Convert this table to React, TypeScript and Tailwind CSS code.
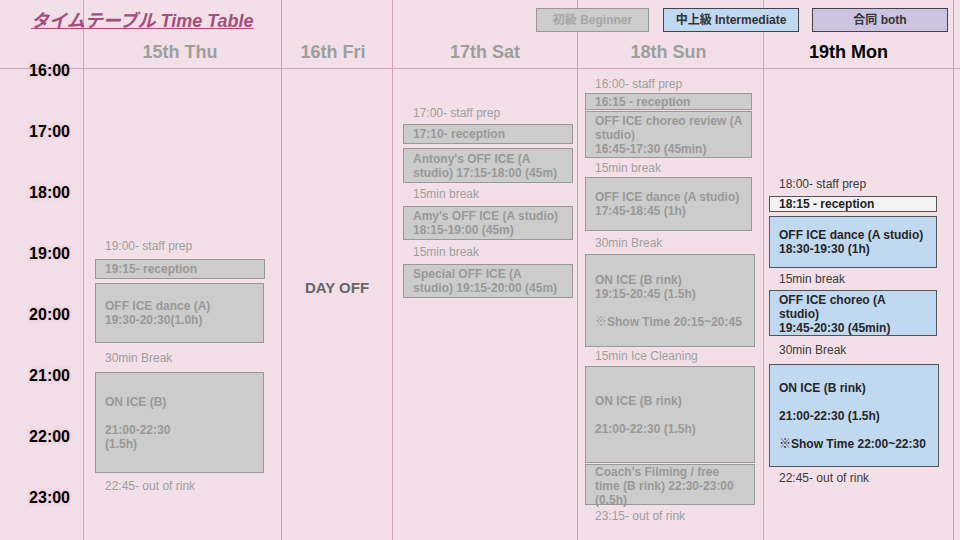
// Skating camp timetable — five day columns with session blocks per hour

type Tone = "gray" | "blue" | "white";

const toneClass: Record<Tone, string> = {
  gray: "bg-[#cccccc] border-[#999999] text-[#999999]",
  blue: "bg-[#c0d8f0] border-[#555555] text-[#262626]",
  white: "bg-[#f3f3f3] border-[#555555] text-[#222222]",
};

function Box({
  tone,
  lines,
  className,
  top = false,
}: {
  tone: Tone;
  lines: string[];
  className: string;
  top?: boolean;
}) {
  return (
    <div
      className={`${toneClass[tone]} ${className} shrink-0 border flex flex-col ${
        top ? "justify-start" : "justify-center"
      } pl-[9px] font-bold text-[12px] leading-[14px] whitespace-nowrap`}
    >
      {lines.map((l, i) =>
        l ? <span key={i}>{l}</span> : <span key={i} className="h-[14px]" />
      )}
    </div>
  );
}

function Note({ text, dark = false, className }: { text: string; dark?: boolean; className: string }) {
  return (
    <p
      className={`${className} shrink-0 pl-[10px] text-[12px] leading-[14px] whitespace-nowrap ${
        dark ? "text-[#3a3a3a]" : "text-[#9e9e9e]"
      }`}
    >
      {text}
    </p>
  );
}

const hours = ["16:00", "17:00", "18:00", "19:00", "20:00", "21:00", "22:00", "23:00"];

const line = "border-[#d6a1b9]";

const days = [
  { label: "15th Thu", tint: "text-[#9e9e9e] pr-[5px]" },
  { label: "16th Fri", tint: "text-[#9e9e9e] pr-[8px]" },
  { label: "17th Sat", tint: "text-[#9e9e9e]" },
  { label: "18th Sun", tint: "text-[#9e9e9e] pr-[4px]" },
  { label: "19th Mon", tint: "text-black pr-[20px]" },
];

export default function App() {
  return (
    <div className="relative w-[960px] h-[540px] overflow-hidden bg-[#f2dfe7] font-['Liberation_Sans','Noto_Sans_CJK_JP',sans-serif]">
      <div className="grid grid-cols-[84px_198px_111px_185px_186px_190px_1fr] grid-rows-[69px_471px]">
        {/* Header row */}
        <div className={`border-r border-b ${line}`} />
        {days.map((d) => (
          <div
            key={d.label}
            className={`border-r border-b ${line} pt-[42px] text-center text-[18px] leading-[21px] font-bold ${d.tint}`}
          >
            {d.label}
          </div>
        ))}
        <div className={`border-b ${line}`} />

        {/* Time labels */}
        <div className={`border-r ${line} flex flex-col items-end pr-[13px]`}>
          {hours.map((h, i) => (
            <div
              key={h}
              className={`${i === 0 ? "-mt-[7px]" : ""} shrink-0 h-[61px] text-[16px] leading-[18px] font-bold text-black [text-shadow:0_0_4px_#e2b5c8]`}
            >
              {h}
            </div>
          ))}
        </div>

        {/* 15th Thu */}
        <div className={`border-r ${line} flex flex-col pl-[11px]`}>
          <Note className="mt-[170px]" text="19:00- staff prep" />
          <Box tone="gray" className="mt-[6px] w-[170px] h-[20px]" lines={["19:15- reception"]} />
          <Box
            tone="gray"
            className="mt-[4px] w-[169px] h-[60px]"
            lines={["OFF ICE dance (A)", "19:30-20:30(1.0h)"]}
          />
          <Note className="mt-[8px]" text="30min Break" />
          <Box
            tone="gray"
            className="mt-[7px] w-[169px] h-[101px]"
            lines={["ON ICE (B)", "", "21:00-22:30", "(1.5h)"]}
          />
          <Note className="mt-[6px]" text="22:45- out of rink" />
        </div>

        {/* 16th Fri */}
        <div className={`border-r ${line} flex flex-col items-center`}>
          <p className="mt-[210px] text-[15px] leading-[18px] font-bold text-[#666666]">DAY OFF</p>
        </div>

        {/* 17th Sat */}
        <div className={`border-r ${line} flex flex-col pl-[10px]`}>
          <Note className="mt-[37px]" text="17:00- staff prep" />
          <Box tone="gray" className="mt-[4px] w-[170px] h-[20px]" lines={["17:10- reception"]} />
          <Box
            tone="gray"
            className="mt-[4px] w-[170px] h-[35px]"
            lines={["Antony's OFF ICE (A", "studio) 17:15-18:00 (45m)"]}
          />
          <Note className="mt-[4px]" text="15min break" />
          <Box
            tone="gray"
            className="mt-[5px] w-[170px] h-[34px]"
            lines={["Amy's OFF ICE (A studio)", "18:15-19:00 (45m)"]}
          />
          <Note className="mt-[5px]" text="15min break" />
          <Box
            tone="gray"
            className="mt-[5px] w-[170px] h-[34px]"
            lines={["Special OFF ICE (A", "studio) 19:15-20:00 (45m)"]}
          />
        </div>

        {/* 18th Sun */}
        <div className={`border-r ${line} flex flex-col pl-[7px]`}>
          <Note className="mt-[8px]" text="16:00- staff prep" />
          <Box tone="gray" className="mt-[2px] w-[167px] h-[17px]" lines={["16:15 - reception"]} />
          <Box
            tone="gray"
            top
            className="mt-[1px] w-[167px] h-[47px] pt-[2px]"
            lines={["OFF ICE choreo review (A", "studio)", "16:45-17:30 (45min)"]}
          />
          <Note className="mt-[3px]" text="15min break" />
          <Box
            tone="gray"
            className="mt-[2px] w-[167px] h-[54px]"
            lines={["OFF ICE dance (A studio)", "17:45-18:45 (1h)"]}
          />
          <Note className="mt-[5px]" text="30min Break" />
          <Box
            tone="gray"
            className="mt-[4px] w-[170px] h-[93px]"
            lines={["ON ICE (B rink)", "19:15-20:45 (1.5h)", "", "※Show Time 20:15~20:45"]}
          />
          <Note className="mt-[2px]" text="15min Ice Cleaning" />
          <Box
            tone="gray"
            className="mt-[3px] w-[170px] h-[97px]"
            lines={["ON ICE (B rink)", "", "21:00-22:30 (1.5h)"]}
          />
          <Box
            tone="gray"
            top
            className="mt-[1px] w-[170px] h-[41px] leading-[13.5px]"
            lines={["Coach's Filming / free", "time (B rink) 22:30-23:00", "(0.5h)"]}
          />
          <Note className="mt-[4px]" text="23:15- out of rink" />
        </div>

        {/* 19th Mon */}
        <div className={`border-r ${line} flex flex-col pl-[5px]`}>
          <Note dark className="mt-[108px]" text="18:00- staff prep" />
          <Box tone="white" className="mt-[5px] w-[168px] h-[16px]" lines={["18:15 - reception"]} />
          <Box
            tone="blue"
            className="mt-[4px] w-[168px] h-[52px]"
            lines={["OFF ICE dance (A studio)", "18:30-19:30 (1h)"]}
          />
          <Note dark className="mt-[4px]" text="15min break" />
          <Box
            tone="blue"
            top
            className="mt-[4px] w-[168px] h-[46px] pt-[2px]"
            lines={["OFF ICE choreo (A", "studio)", "19:45-20:30 (45min)"]}
          />
          <Note dark className="mt-[7px]" text="30min Break" />
          <Box
            tone="blue"
            className="mt-[7px] w-[170px] h-[103px]"
            lines={["ON ICE (B rink)", "", "21:00-22:30 (1.5h)", "", "※Show Time 22:00~22:30"]}
          />
          <Note dark className="mt-[4px]" text="22:45- out of rink" />
        </div>

        <div />
      </div>

      {/* Title overlay */}
      <h1 className="absolute left-[31px] top-[11px] text-[18px] leading-[21px] font-bold italic underline text-[#a64d79]">
        タイムテーブル Time Table
      </h1>

      {/* Legend overlay */}
      <div className="absolute left-[536px] top-[8px] flex text-[12px] font-bold">
        <div className="w-[113px] h-[24px] flex items-center justify-center border border-[#999999] bg-[#cccccc] text-[#a6a6a6]">
          初級 Beginner
        </div>
        <div className="ml-[14px] w-[136px] h-[24px] flex items-center justify-center border border-[#444444] bg-[#c0d8f0] text-[#333333]">
          中上級 Intermediate
        </div>
        <div className="ml-[13px] w-[136px] h-[24px] flex items-center justify-center border border-[#444444] bg-[#cbc3df] text-[#333333]">
          合同 both
        </div>
      </div>
    </div>
  );
}
